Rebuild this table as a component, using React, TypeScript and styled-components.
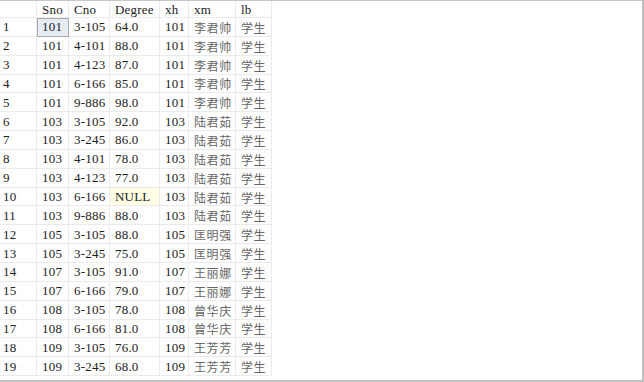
import React from "react";
import styled, { createGlobalStyle } from "styled-components";

const Global = createGlobalStyle`
  html, body { margin: 0; padding: 0; background: #ffffff; }
  #root { width: 644px; height: 382px; }
`;

const Frame = styled.div`
  box-sizing: border-box;
  width: 644px;
  height: 382px;
  background: #ffffff;
  border-top: 1px solid #c8c8c8;
  border-right: 2px solid #c0c0c0;
  border-bottom: 2px solid #c0c0c0;
`;

const Grid = styled.div`
  display: grid;
  grid-template-columns: 37px 32px 41px 50px 29px 47px 36px;
  grid-template-rows: 17px;
  grid-auto-rows: 18.85px;
  width: 272px;
`;

const Cell = styled.div<{ $head?: boolean; $cjk?: boolean; $null?: boolean; $selected?: boolean; $num?: boolean }>`
  box-sizing: border-box;
  display: flex;
  align-items: center;
  padding-left: ${(p) => (p.$num ? "3px" : p.$cjk ? "5px" : "5px")};
  padding-top: 1px;
  border-right: 1px solid #ebebeb;
  border-bottom: 1px solid #ebebeb;
  font-family: ${(p) =>
    p.$cjk ? '"Noto Sans CJK SC", sans-serif' : '"Liberation Serif", serif'};
  font-size: ${(p) => (p.$cjk ? "12px" : "13px")};
  letter-spacing: ${(p) => (p.$cjk ? "0.6px" : "0.2px")};
  color: ${(p) => (p.$cjk ? "#666666" : "#222222")};
  white-space: nowrap;
  overflow: hidden;
  background: ${(p) => (p.$selected ? "#e6ecf3" : p.$null ? "#fffde3" : "#ffffff")};
  ${(p) => (p.$selected ? "outline: 1px solid #a9a9a9; outline-offset: -1px;" : "")}
`;

const rows: [string, string, string, string, string, string][] = [
  ["101", "3-105", "64.0", "101", "李君帅", "学生"],
  ["101", "4-101", "88.0", "101", "李君帅", "学生"],
  ["101", "4-123", "87.0", "101", "李君帅", "学生"],
  ["101", "6-166", "85.0", "101", "李君帅", "学生"],
  ["101", "9-886", "98.0", "101", "李君帅", "学生"],
  ["103", "3-105", "92.0", "103", "陆君茹", "学生"],
  ["103", "3-245", "86.0", "103", "陆君茹", "学生"],
  ["103", "4-101", "78.0", "103", "陆君茹", "学生"],
  ["103", "4-123", "77.0", "103", "陆君茹", "学生"],
  ["103", "6-166", "NULL", "103", "陆君茹", "学生"],
  ["103", "9-886", "88.0", "103", "陆君茹", "学生"],
  ["105", "3-105", "88.0", "105", "匡明强", "学生"],
  ["105", "3-245", "75.0", "105", "匡明强", "学生"],
  ["107", "3-105", "91.0", "107", "王丽娜", "学生"],
  ["107", "6-166", "79.0", "107", "王丽娜", "学生"],
  ["108", "3-105", "78.0", "108", "曾华庆", "学生"],
  ["108", "6-166", "81.0", "108", "曾华庆", "学生"],
  ["109", "3-105", "76.0", "109", "王芳芳", "学生"],
  ["109", "3-245", "68.0", "109", "王芳芳", "学生"],
];

const headers = ["Sno", "Cno", "Degree", "xh", "xm", "lb"];

export default function App() {
  return (
    <>
      <Global />
      <Frame>
        <Grid>
          <Cell $head $num />
          {headers.map((h) => (
            <Cell key={h} $head>
              {h}
            </Cell>
          ))}
          {rows.map((r, i) => (
            <React.Fragment key={i}>
              <Cell $num>{i + 1}</Cell>
              <Cell $selected={i === 0}>{r[0]}</Cell>
              <Cell>{r[1]}</Cell>
              <Cell $null={r[2] === "NULL"}>{r[2]}</Cell>
              <Cell>{r[3]}</Cell>
              <Cell $cjk>{r[4]}</Cell>
              <Cell $cjk>{r[5]}</Cell>
            </React.Fragment>
          ))}
        </Grid>
      </Frame>
    </>
  );
}
